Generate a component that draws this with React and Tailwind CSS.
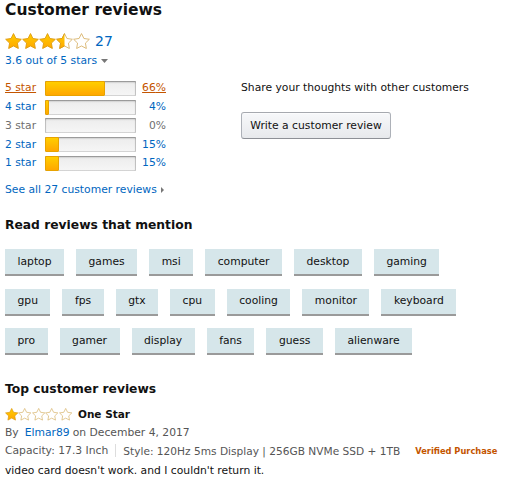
import { useId } from 'react'

const STAR_POINTS =
  '12,2.5 14.94,8.45 21.51,9.41 16.76,14.05 17.88,20.59 12,17.5 6.12,20.59 7.24,14.05 2.49,9.41 9.06,8.45'

function Star({ fill, w, h }) {
  const id = useId().replace(/:/g, '')
  return (
    <svg width={w} height={h} viewBox="1.8 1.8 20.4 19.4" className="block shrink-0">
      <defs>
        <linearGradient id={`g${id}`} x1="0" y1="0" x2="0" y2="1">
          <stop offset="0" stopColor="#ffce00" />
          <stop offset="1" stopColor="#ffa700" />
        </linearGradient>
        <clipPath id={`c${id}`}>
          <rect x="0" y="0" width="12" height="24" />
        </clipPath>
      </defs>
      {fill !== 'full' && (
        <polygon points={STAR_POINTS} fill="#fff" stroke="#d8b46c" strokeWidth="1.1" strokeLinejoin="round" />
      )}
      {fill !== 'empty' && (
        <polygon
          points={STAR_POINTS}
          fill={`url(#g${id})`}
          stroke="#de9a10"
          strokeWidth="1.1"
          strokeLinejoin="round"
          clipPath={fill === 'half' ? `url(#c${id})` : undefined}
        />
      )}
    </svg>
  )
}

function Stars({ rating, w, h }) {
  return (
    <div className="flex">
      {[1, 2, 3, 4, 5].map((n) => (
        <Star key={n} w={w} h={h} fill={rating >= n ? 'full' : rating >= n - 0.5 ? 'half' : 'empty'} />
      ))}
    </div>
  )
}

const histogram = [
  { label: '5 star', pct: 66, active: true },
  { label: '4 star', pct: 4 },
  { label: '3 star', pct: 0 },
  { label: '2 star', pct: 15 },
  { label: '1 star', pct: 15 },
]

const tagRows = [
  ['laptop', 'games', 'msi', 'computer', 'desktop', 'gaming'],
  ['gpu', 'fps', 'gtx', 'cpu', 'cooling', 'monitor', 'keyboard'],
  ['pro', 'gamer', 'display', 'fans', 'guess', 'alienware'],
]

function HistogramRow({ row }) {
  const empty = row.pct === 0
  const color = row.active ? 'text-[#c45500] underline' : empty ? 'text-[#6f6f6f]' : 'text-[#0066c0]'
  return (
    <div className="flex h-[18.75px] items-center">
      <span className={`w-[40px] ${color}`}>{row.label}</span>
      <div className="h-[15px] w-[91px] overflow-hidden rounded-[1px] bg-linear-to-b from-[#ececec] to-[#f6f6f6] shadow-[inset_0_1px_2px_rgba(0,0,0,0.35),inset_0_0_0_1px_rgba(0,0,0,0.12)]">
        {row.pct > 0 && (
          <div
            className="h-full rounded-[1px] border border-[#e8a300] bg-linear-to-b from-[#ffce00] to-[#ffa700]"
            style={{ width: `${row.pct}%` }}
          />
        )}
      </div>
      <span className={`w-[30px] text-right ${color}`}>{row.pct}%</span>
    </div>
  )
}

export default function App() {
  return (
    <div className="h-[492px] w-[522px] overflow-hidden bg-white pl-[5px] font-['DejaVu_Sans',sans-serif] text-[10.75px] leading-[14px] text-[#111]">
      <h2 className="text-[15.5px] font-bold leading-[20px]">Customer reviews</h2>

      <div className="mt-[12px] flex h-[18px] items-center">
        <Stars rating={3.5} w={17} h={16} />
        <span className="ml-[5px] text-[14px] text-[#0066c0]">27</span>
      </div>
      <div className="mt-[4px] flex items-center text-[#0066c0]">
        <span>3.6 out of 5 stars</span>
        <svg width="7" height="4" viewBox="0 0 7 4" className="ml-[4px]">
          <polygon points="0,0 7,0 3.5,4" fill="#777" />
        </svg>
      </div>

      <div className="mt-[11px] flex">
        <div className="w-[236px]">
          {histogram.map((row) => (
            <HistogramRow key={row.label} row={row} />
          ))}
          <div className="mt-[10px] flex items-center text-[#0066c0]">
            <span>See all 27 customer reviews</span>
            <svg width="3" height="6" viewBox="0 0 3 6" className="ml-[4px]">
              <polygon points="0,0 3,3 0,6" fill="#777" />
            </svg>
          </div>
        </div>
        <div>
          <p className="flex h-[18.75px] items-center">Share your thoughts with other customers</p>
          <button
            type="button"
            className="mt-[14.5px] h-[27px] w-[150px] rounded-[3px] border border-[#adb1b8] border-t-[#a6a9af] border-b-[#8d9096] bg-linear-to-b from-[#f7f8fa] to-[#e7e9ec] text-[#111] shadow-[inset_0_1px_0_rgba(255,255,255,0.6)]"
          >
            Write a customer review
          </button>
        </div>
      </div>

      <h3 className="mt-[20px] text-[12.3px] font-bold leading-[16px]">Read reviews that mention</h3>
      <div className="mt-[16.5px] flex flex-col gap-y-[12.5px]">
        {tagRows.map((row, i) => (
          <div key={i} className="flex gap-x-[12px]">
            {row.map((tag) => (
              <span
                key={tag}
                className="flex h-[27px] items-center border-b-2 border-[#9a9a9a] bg-[#d6e6ea] px-[12.5px] text-[#111]"
              >
                {tag}
              </span>
            ))}
          </div>
        ))}
      </div>

      <h3 className="mt-[26px] text-[12.3px] font-bold leading-[16px]">Top customer reviews</h3>
      <div className="mt-[9px] flex h-[16px] items-center">
        <Stars rating={1} w={13.4} h={12.5} />
        <span className="ml-[6px] text-[10.5px] font-bold">One Star</span>
      </div>
      <div className="mt-[1.4px] flex h-[18px] items-center text-[#555]">
        <span>By</span>
        <span className="ml-[6px] text-[#0066c0]">Elmar89</span>
        <span className="ml-[3px]">on December 4, 2017</span>
      </div>
      <div className="flex h-[18px] items-center text-[#555]">
        <span>Capacity: 17.3 Inch</span>
        <span className="mx-[7px] h-[13px] w-px bg-[#ddd]" />
        <span className="text-[10.6px]">Style: 120Hz 5ms Display | 256GB NVMe SSD + 1TB</span>
        <span className="ml-[15px] text-[8.3px] font-bold text-[#c45500]">Verified Purchase</span>
      </div>
      <p className="mt-[2.3px] leading-[18px]">video card doesn't work. and I couldn't return it.</p>
    </div>
  )
}
